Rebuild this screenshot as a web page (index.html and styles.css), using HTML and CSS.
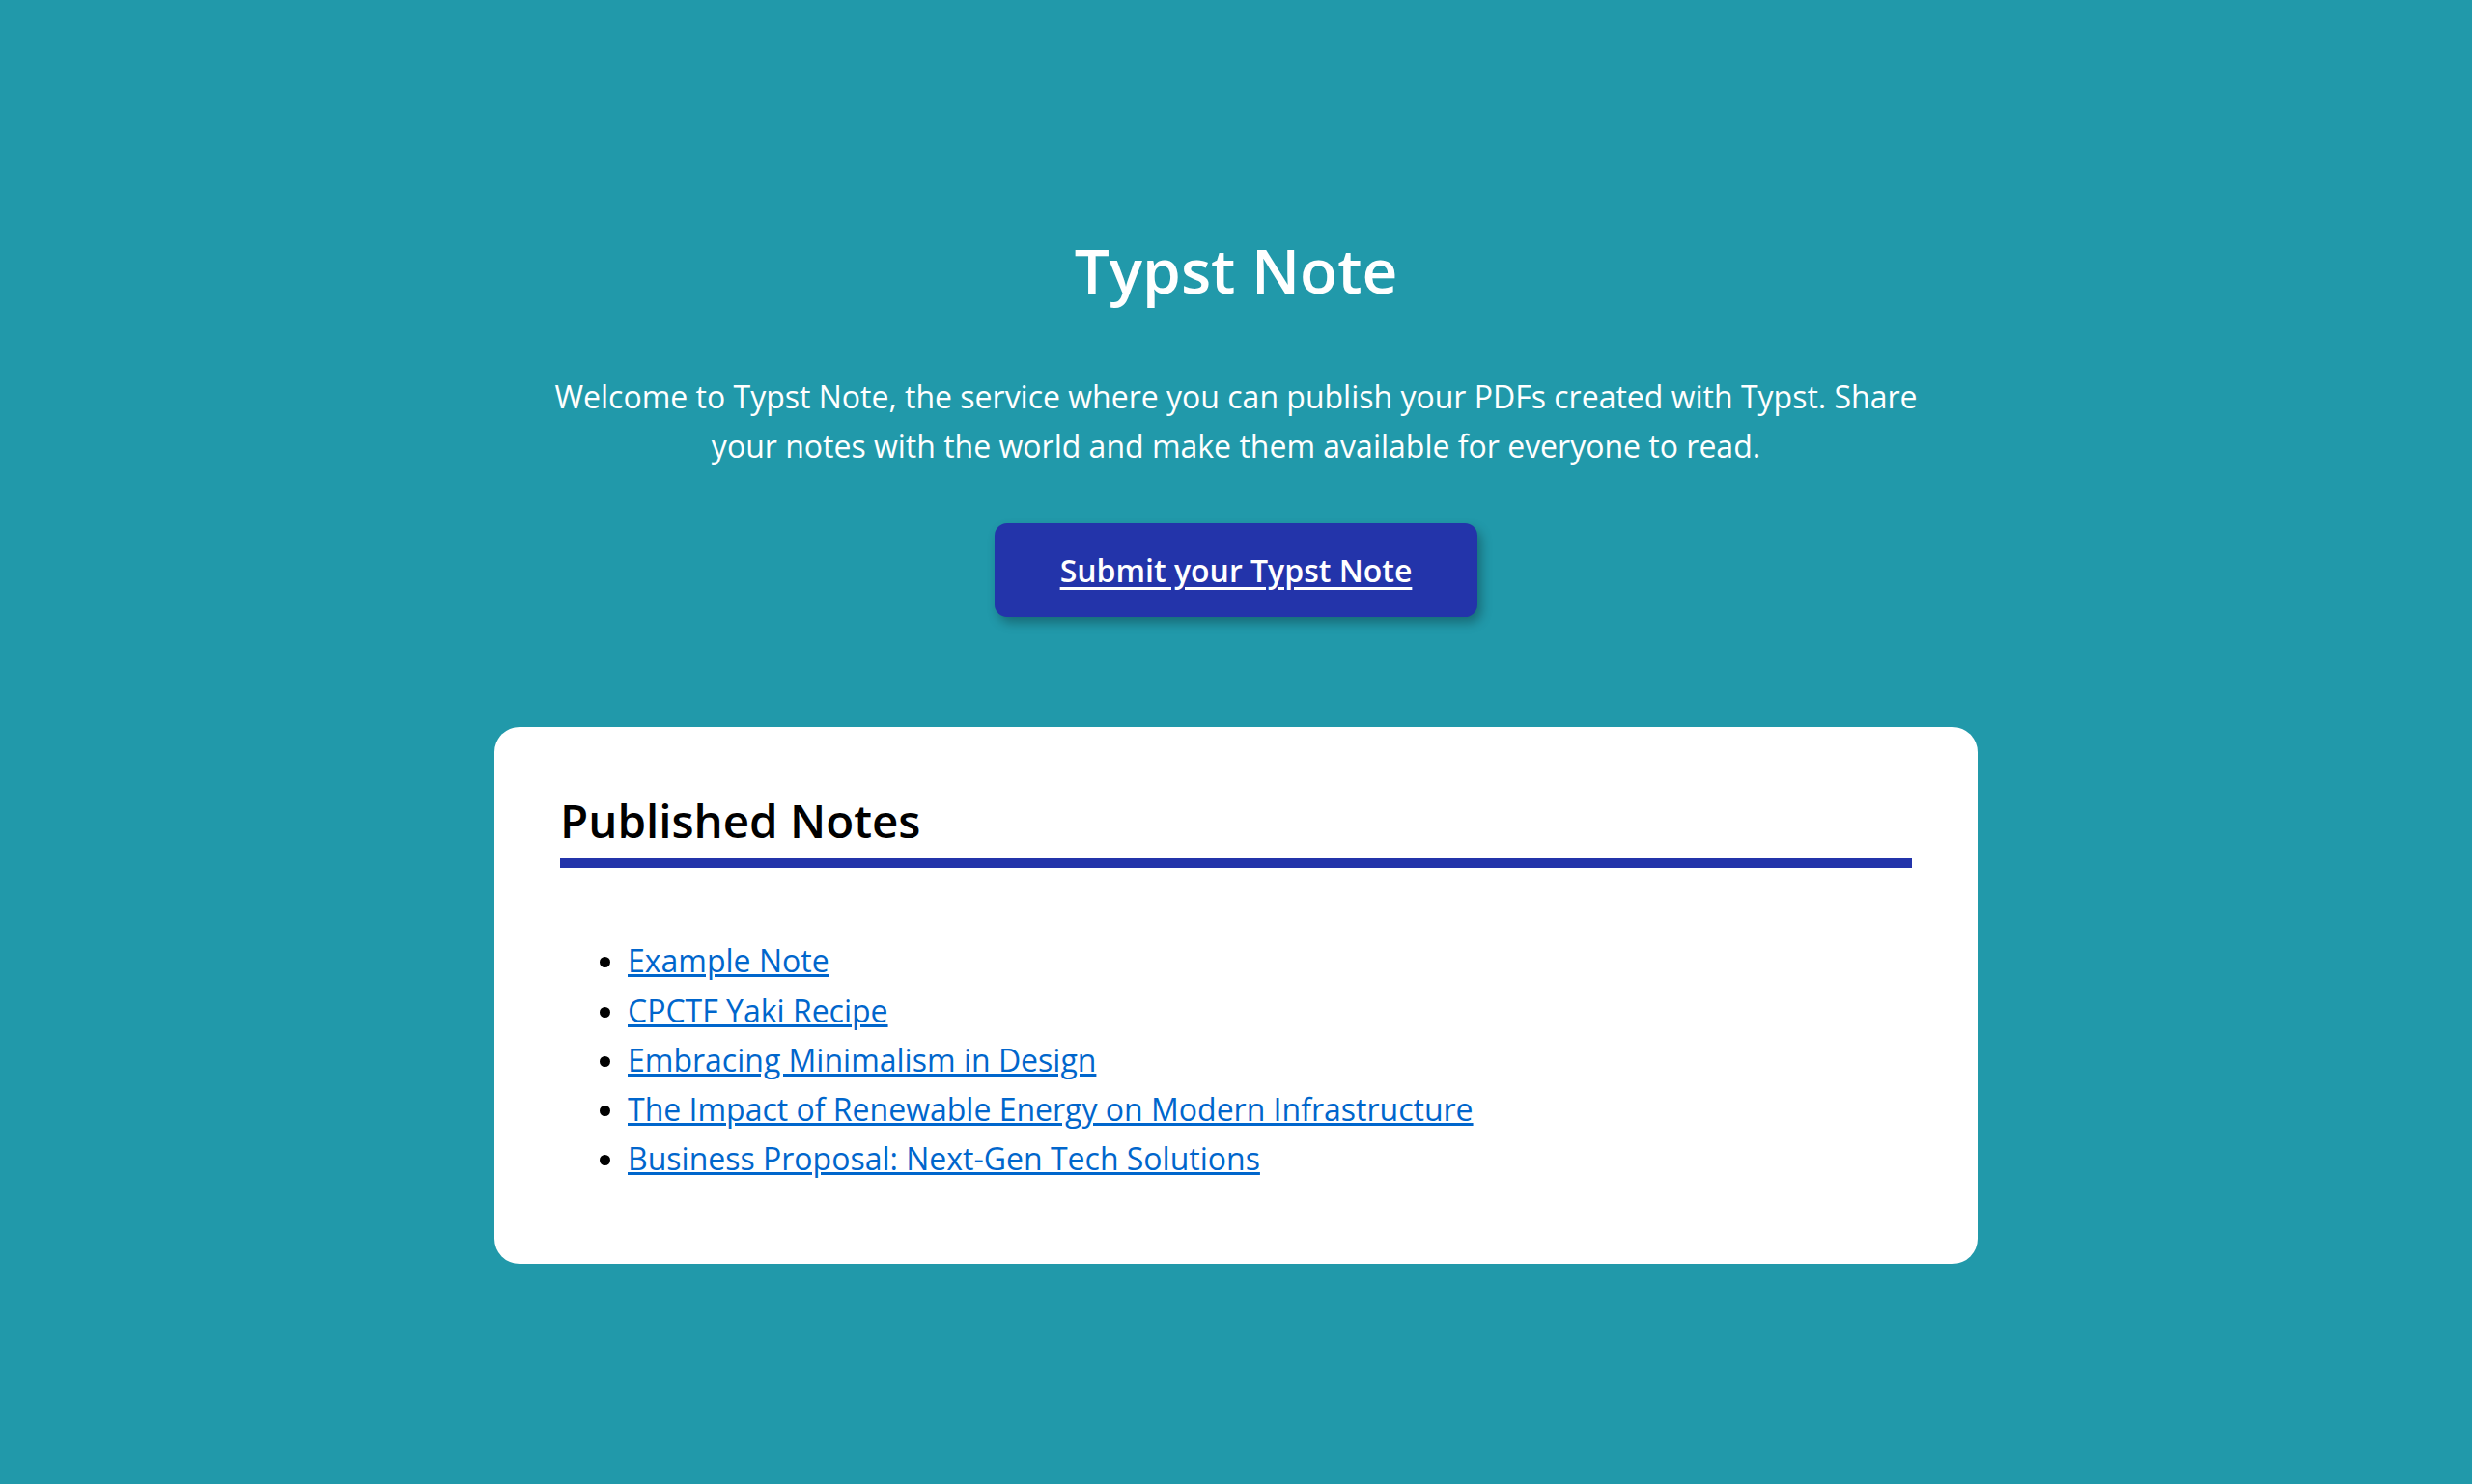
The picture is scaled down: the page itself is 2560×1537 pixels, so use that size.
FILE: index.html
```html
<!DOCTYPE html>
<html lang="en">
<head>
<meta charset="utf-8">
<title>Typst Note</title>
<link rel="stylesheet" href="styles.css">
</head>
<body>
<main class="page">
  <header class="hero">
    <h1 class="title">Typst Note</h1>
    <p class="intro">Welcome to Typst Note, the service where you can publish your PDFs created with Typst. Share your notes with the world and make them available for everyone to read.</p>
    <a class="submit" href="#">Submit your Typst Note</a>
  </header>
  <section class="card">
    <h2 class="card-title">Published Notes</h2>
    <ul class="notes">
      <li><a href="#">Example Note</a></li>
      <li><a href="#">CPCTF Yaki Recipe</a></li>
      <li><a href="#">Embracing Minimalism in Design</a></li>
      <li><a href="#">The Impact of Renewable Energy on Modern Infrastructure</a></li>
      <li><a href="#">Business Proposal: Next-Gen Tech Solutions</a></li>
    </ul>
  </section>
</main>
</body>
</html>
```

FILE: styles.css
```css
html {
  background: #2199aa;
}

body {
  margin: 0;
  background: #2199aa;
  font-family: "Open Sans", "Noto Sans", sans-serif;
  font-size: 32px;
  line-height: 51.2px;
  color: #ffffff;
}

.page {
  display: flex;
  flex-direction: column;
  align-items: center;
  padding: 235px 0 228px;
}

.hero {
  display: flex;
  flex-direction: column;
  align-items: center;
  width: 1440px;
  text-align: center;
}

.title {
  margin: 0;
  font-size: 64px;
  font-weight: 600;
  line-height: 90px;
}

.intro {
  margin: 60px 0 0;
}

.submit {
  margin-top: 55px;
  display: flex;
  align-items: center;
  justify-content: center;
  width: 500px;
  height: 97px;
  box-sizing: border-box;
  background: #2334aa;
  color: #ffffff;
  border-radius: 13px;
  font-weight: 600;
  text-decoration: underline;
  text-underline-offset: 5px;
  box-shadow: 4px 6px 12px rgba(0, 0, 0, 0.3);
}

.card {
  margin-top: 114px;
  width: 1536px;
  box-sizing: border-box;
  padding: 67px 68px 68px;
  background: #ffffff;
  border-radius: 26px;
  color: #000000;
}

.card-title {
  margin: 0;
  padding-bottom: 9px;
  border-bottom: 10px solid #2334aa;
  font-size: 47.5px;
  font-weight: 600;
  line-height: 60px;
}

.notes {
  margin: 70px 0 16px;
  padding-left: 70px;
}

.notes a {
  color: #0066cc;
  text-decoration: underline;
}
```
